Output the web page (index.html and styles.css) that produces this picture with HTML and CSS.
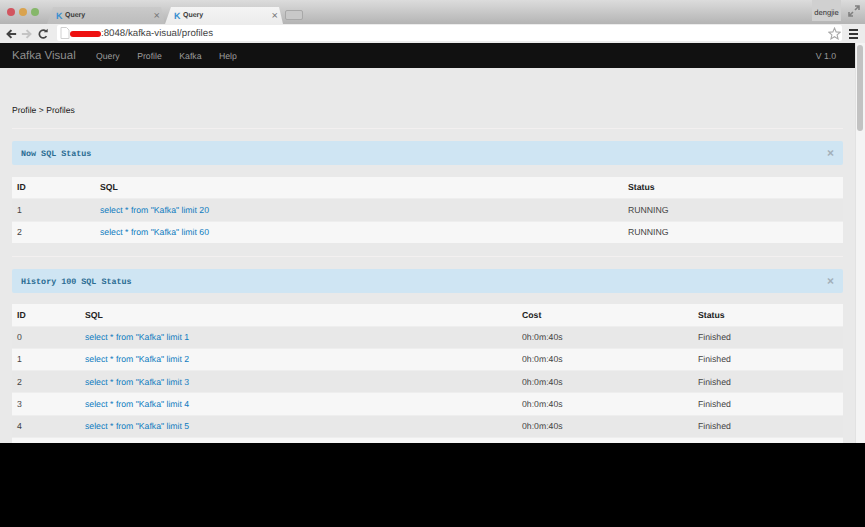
FILE: index.html
```html
<!DOCTYPE html>
<html>

<head>
    <title>Kafka Visual</title>
    <link rel="stylesheet" href="styles.css">
</head>

<body>
    <div class="window">
        <div class="titlebar">
            <div class="lights">
                <span class="light red"></span>
                <span class="light yellow"></span>
                <span class="light green"></span>
            </div>
            <div class="tabs">
                <div class="tab">
                    <span class="tab-k">K</span>
                    <span class="tab-name">Query</span>
                    <span class="tab-x">&times;</span>
                </div>
                <div class="tab active">
                    <span class="tab-k">K</span>
                    <span class="tab-name">Query</span>
                    <span class="tab-x">&times;</span>
                </div>
                <div class="newtab"></div>
            </div>
            <div class="user">dengjie</div>
            <svg class="expand" width="12" height="12" viewBox="0 0 12 12">
                <path d="M7 1h4v4M11 1L7 5M1 7v4h4M1 11l4-4" fill="none" stroke="#808080" stroke-width="1.600" />
            </svg>
        </div>
        <div class="toolbar">
            <svg class="tool" width="12" height="12" viewBox="0 0 14 14">
                <path d="M13 7H4M7.500 2.500L3 7l4.500 4.500" fill="none" stroke="#444" stroke-width="2.400" />
            </svg>
            <svg class="tool" width="12" height="12" viewBox="0 0 14 14">
                <path d="M1 7h9M6.500 2.500L11 7l-4.500 4.500" fill="none" stroke="#c4c4c4" stroke-width="2.400" />
            </svg>
            <svg class="tool" width="12" height="12" viewBox="0 0 14 14">
                <path d="M11 9.500A4.500 4.500 0 1 1 10.500 4" fill="none" stroke="#444" stroke-width="2" />
                <path d="M8 5h4.500V0.800z" fill="#444" />
            </svg>
            <div class="omnibox">
                <svg class="page-icon" width="10" height="12" viewBox="0 0 10 12">
                    <path d="M1 .5h5.500L9 3v8.500H1z" fill="#fff" stroke="#d0d0d0" />
                </svg>
                <span class="redacted"></span>
                <span class="url">:8048/kafka-visual/profiles</span>
                <svg class="star" width="13" height="13" viewBox="0 0 24 24">
                    <path d="M12 2l3 7 7.500.6-5.700 4.900 1.800 7.500L12 18l-6.600 4 1.800-7.500L1.500 9.600 9 9z" fill="#fff" stroke="#a8a8a8" stroke-width="2" />
                </svg>
            </div>
            <div class="menu-icon"><span></span><span></span><span></span></div>
        </div>
        <div class="viewport">
            <div class="page">
                <nav class="navbar">
                    <a class="brand">Kafka Visual</a>
                    <ul class="nav">
                        <li>Query</li>
                        <li>Profile</li>
                        <li>Kafka</li>
                        <li>Help</li>
                    </ul>
                    <span class="version">V 1.0</span>
                </nav>
                <div class="container">
                    <div class="crumb">Profile &gt; Profiles</div>
                    <hr>
                    <div class="alert">
                        <strong>Now SQL Status</strong>
                        <span class="close">&times;</span>
                    </div>
                    <table class="now-table">
                        <thead>
                            <tr>
                                <th class="col-id">ID</th>
                                <th class="col-sql">SQL</th>
                                <th>Status</th>
                            </tr>
                        </thead>
                        <tbody>
                            <tr>
                                <td>1</td>
                                <td><a>select * from "Kafka" limit 20</a></td>
                                <td>RUNNING</td>
                            </tr>
                            <tr>
                                <td>2</td>
                                <td><a>select * from "Kafka" limit 60</a></td>
                                <td>RUNNING</td>
                            </tr>
                        </tbody>
                    </table>
                    <hr>
                    <div class="alert">
                        <strong>History 100 SQL Status</strong>
                        <span class="close">&times;</span>
                    </div>
                    <table class="history-table">
                        <thead>
                            <tr>
                                <th class="col-id">ID</th>
                                <th class="col-sql">SQL</th>
                                <th class="col-cost">Cost</th>
                                <th>Status</th>
                            </tr>
                        </thead>
                        <tbody>
                            <tr>
                                <td>0</td>
                                <td><a>select * from "Kafka" limit 1</a></td>
                                <td>0h:0m:40s</td>
                                <td>Finished</td>
                            </tr>
                            <tr>
                                <td>1</td>
                                <td><a>select * from "Kafka" limit 2</a></td>
                                <td>0h:0m:40s</td>
                                <td>Finished</td>
                            </tr>
                            <tr>
                                <td>2</td>
                                <td><a>select * from "Kafka" limit 3</a></td>
                                <td>0h:0m:40s</td>
                                <td>Finished</td>
                            </tr>
                            <tr>
                                <td>3</td>
                                <td><a>select * from "Kafka" limit 4</a></td>
                                <td>0h:0m:40s</td>
                                <td>Finished</td>
                            </tr>
                            <tr>
                                <td>4</td>
                                <td><a>select * from "Kafka" limit 5</a></td>
                                <td>0h:0m:40s</td>
                                <td>Finished</td>
                            </tr>
                            <tr>
                                <td colspan="4"></td>
                            </tr>
                        </tbody>
                    </table>
                </div>
            </div>
            <div class="scrollbar"><div class="thumb"></div></div>
        </div>
    </div>
</body>

</html>
```

FILE: styles.css
```css
html,
body {
    width: 100%;
    height: 100%;
    overflow: hidden;
    margin: 0;
    padding: 0;
}

body {
    background-color: black;
    font-family: "Liberation Sans", Arial, sans-serif;
    color: #333;
    text-rendering: geometricPrecision;
}

.window {
    height: 443px;
    display: flex;
    flex-direction: column;
    overflow: hidden;
}

/* browser chrome */
.titlebar {
    height: 24px;
    flex: none;
    display: flex;
    align-items: flex-end;
    background: linear-gradient(#dcdcdc, #b4b4b4);
    padding-left: 7px;
    padding-right: 5px;
}

.lights {
    display: flex;
    gap: 4px;
    align-self: flex-start;
    margin-top: 8px;
    width: 36px;
    flex: none;
}

.light {
    width: 8px;
    height: 8px;
    border-radius: 50%;
}

.red {
    background: #d2555f;
}

.yellow {
    background: #d9a34f;
}

.green {
    background: #86b76a;
}

.tabs {
    display: flex;
    align-items: flex-end;
    flex: 1;
    margin-left: 4px;
}

.tab {
    width: 118px;
    height: 17px;
    display: flex;
    align-items: center;
    padding: 0 4px 0 9px;
    box-sizing: border-box;
    background: linear-gradient(#cacaca, #bcbcbc);
    clip-path: polygon(0 100%, 6px 0, calc(100% - 4px) 0, 100% 100%);
    font-size: 7px;
}

.tab.active {
    background: linear-gradient(#f4f4f4, #ececec);
}

.tab-k {
    color: #3a8fd0;
    font-weight: bold;
    font-size: 9px;
    width: 7px;
    margin-right: 2px;
}

.tab-name {
    flex: 1;
    font-weight: bold;
    color: #3a3a3a;
}

.tab-x {
    color: #777;
    font-size: 11px;
    margin-right: 1px;
}

.newtab {
    width: 18px;
    height: 10px;
    margin-bottom: 4px;
    margin-left: 2px;
    background: #c8c8c8;
    border: 1px solid #a8a8a8;
    border-radius: 2px;
    box-sizing: border-box;
}

.user {
    width: 29px;
    height: 21px;
    flex: none;
    align-self: flex-start;
    margin-right: 7px;
    background: #d0d0d0;
    font-size: 7.600px;
    line-height: 26px;
    text-align: center;
    color: #333;
}

.expand {
    flex: none;
    align-self: flex-start;
    margin-top: 5px;
}

.toolbar {
    height: 19px;
    flex: none;
    display: flex;
    align-items: center;
    gap: 4px;
    background: #ececec;
    padding-left: 5px;
}

.tool {
    flex: none;
}

.omnibox {
    flex: none;
    width: 785px;
    height: 16px;
    margin-left: 4px;
    align-self: flex-start;
    margin-top: 1px;
    display: flex;
    align-items: center;
    background: white;
    border-radius: 2px;
    font-size: 9.700px;
    color: #444;
    padding-left: 3px;
    box-sizing: border-box;
}

.page-icon {
    flex: none;
}

.redacted {
    width: 31px;
    height: 6px;
    margin-top: 2px;
    background: #ee1111;
    border-radius: 3px;
}

.url {
    flex: 1;
}

.star {
    margin-right: 1px;
}

.menu-icon {
    display: flex;
    flex-direction: column;
    gap: 2px;
    margin-left: 3px;
}

.menu-icon span {
    display: block;
    width: 9px;
    height: 2px;
    background: #333;
}

/* page inside the browser */
.viewport {
    flex: 1;
    display: flex;
    overflow: hidden;
    min-height: 0;
}

.page {
    flex: 1;
    min-width: 0;
    background: #e9e9e9;
    overflow: hidden;
}

.navbar {
    height: 25px;
    display: flex;
    align-items: center;
    background: #111;
    padding: 0 19px 0 12px;
    color: #9c9c9c;
}

.brand {
    font-size: 11.500px;
    width: 84px;
    color: #8e8e8e;
}

.nav {
    display: flex;
    gap: 17.500px;
    list-style: none;
    margin: 0;
    padding: 0;
    flex: 1;
    font-size: 8.700px;
}

.version {
    font-size: 8.700px;
}

.container {
    padding: 0 12px;
}

.crumb {
    font-size: 8.600px;
    color: #222;
    line-height: 12px;
    margin-top: 36px;
}

hr {
    height: 1px;
    background: #f3f0f0;
    border: 0;
    margin: 0;
}

.crumb + hr {
    margin-top: 12px;
}

.alert {
    height: 24px;
    display: flex;
    align-items: center;
    justify-content: space-between;
    margin-top: 12px;
    padding: 0 9px;
    background: #cfe5f3;
    border-radius: 2px;
    color: #2a6c92;
    font-family: "Liberation Mono", monospace;
    font-size: 8.400px;
}

.alert strong {
    padding-top: 2px;
}

.close {
    font-family: "Liberation Sans", sans-serif;
    font-size: 12px;
    font-weight: bold;
    color: #a2afb8;
}

table {
    width: 100%;
    table-layout: fixed;
    border-collapse: collapse;
    font-size: 8.700px;
}

.now-table {
    margin-top: 11.500px;
    margin-bottom: 12.500px;
}

.history-table {
    margin-top: 11px;
}

th,
td {
    height: 22.250px;
    padding: 0 5px;
    text-align: left;
    box-sizing: border-box;
}

th {
    color: #222;
}

td {
    color: #444;
}

a {
    color: #0f7cc0;
}

thead tr {
    background: #f7f7f7;
}

tbody tr {
    background: #f7f7f7;
    border-top: 1px solid #eeeeee;
}

tbody tr:nth-child(odd) {
    background: #e8e8e8;
}

.now-table .col-id {
    width: 83px;
}

.now-table .col-sql {
    width: 528px;
}

.history-table .col-id {
    width: 68px;
}

.history-table .col-sql {
    width: 437px;
}

.history-table .col-cost {
    width: 176px;
}

.scrollbar {
    width: 10px;
    flex: none;
    background: #f4f4f4;
    border-left: 1px solid #e2e2e2;
    box-sizing: border-box;
    padding: 2px 1px;
}

.thumb {
    width: 6px;
    height: 86px;
    background: #c2c2c2;
    border-radius: 3px;
}
```
